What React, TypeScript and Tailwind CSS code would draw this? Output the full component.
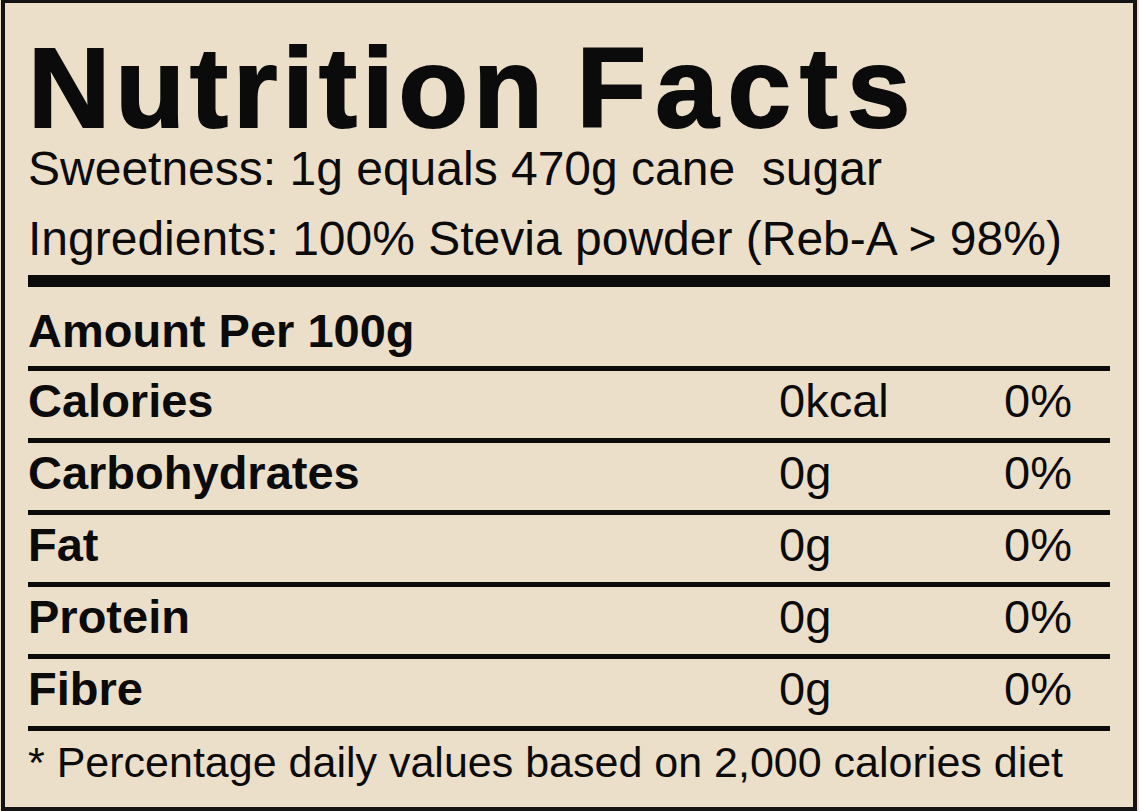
const rows = [
  { label: "Calories", value: "0kcal", pct: "0%" },
  { label: "Carbohydrates", value: "0g", pct: "0%" },
  { label: "Fat", value: "0g", pct: "0%" },
  { label: "Protein", value: "0g", pct: "0%" },
  { label: "Fibre", value: "0g", pct: "0%" },
];

function Row({ label, value, pct }: { label: string; value: string; pct: string }) {
  return (
    <div className="flex h-[67px] pb-[8px] leading-[59px] text-[47px]">
      <div className="w-[751px] font-bold">{label}</div>
      <div className="w-[225px]">{value}</div>
      <div>{pct}</div>
    </div>
  );
}

export default function App() {
  return (
    <div className="w-[1139px] h-[811px] bg-[#ecdfc9] text-[#0b0b0b] font-['Liberation_Sans',Arial,sans-serif]">
      <div className="ml-[1px] w-[1136px] h-[811px] border-[4px] border-t-[3px] border-[#141414] pl-[23px] pr-[24px] pt-[39px]">
        <div className="w-[1082px]">
          {/* ===== HEADER ===== */}
          <h1 className="text-[114px] leading-[92px] font-bold tracking-[5px] [word-spacing:-8px] whitespace-nowrap [-webkit-text-stroke:2px_#0b0b0b]">
            Nutrition <span className="tracking-[9px]">Facts</span>
          </h1>
          <p className="text-[48px] leading-[70px] whitespace-pre">Sweetness: 1g equals 470g cane  sugar</p>
          <p className="text-[48px] leading-[70px] whitespace-nowrap">Ingredients: 100% Stevia powder (Reb-A &gt; 98%)</p>

          <div className="h-[12px] bg-[#0b0b0b] mt-[1px]"></div>

          {/* ===== AMOUNT ===== */}
          <div className="h-[79px] pt-[8px] leading-[71px] text-[47px] font-bold">Amount Per 100g</div>

          {rows.map((r) => (
            <div key={r.label}>
              <div className="h-[5px] bg-[#0b0b0b]"></div>
              <Row label={r.label} value={r.value} pct={r.pct} />
            </div>
          ))}
          <div className="h-[5px] bg-[#0b0b0b]"></div>

          {/* ===== FOOTNOTE ===== */}
          <p className="text-[43px] leading-[62px] whitespace-nowrap">* Percentage daily values based on 2,000 calories diet</p>
        </div>
      </div>
    </div>
  );
}
